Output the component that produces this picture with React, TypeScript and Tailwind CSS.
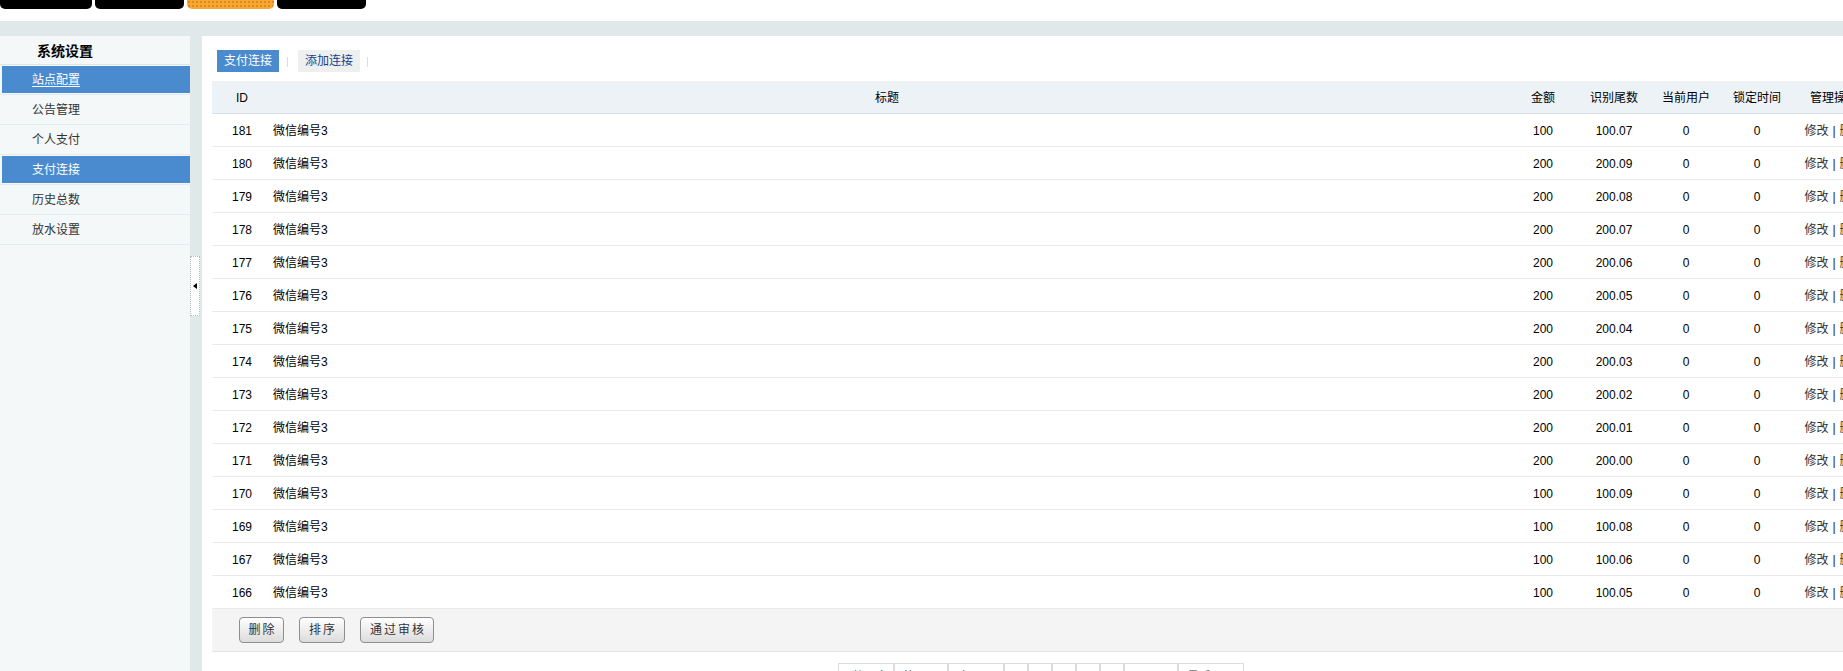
import React from "react";

const rows: [number, number, string][] = [
  [181, 100, "100.07"],
  [180, 200, "200.09"],
  [179, 200, "200.08"],
  [178, 200, "200.07"],
  [177, 200, "200.06"],
  [176, 200, "200.05"],
  [175, 200, "200.04"],
  [174, 200, "200.03"],
  [173, 200, "200.02"],
  [172, 200, "200.01"],
  [171, 200, "200.00"],
  [170, 100, "100.09"],
  [169, 100, "100.08"],
  [167, 100, "100.06"],
  [166, 100, "100.05"],
];

const menu = [
  { label: "站点配置", active: true, underline: true },
  { label: "公告管理" },
  { label: "个人支付" },
  { label: "支付连接", active: true },
  { label: "历史总数" },
  { label: "放水设置" },
];

function TopTabs() {
  return (
    <div className="flex h-[21px] items-start gap-[3px]">
      <div className="h-[9px] w-[92px] rounded-b-[5px] bg-black" />
      <div className="h-[9px] w-[89px] rounded-b-[5px] bg-black" />
      <div className="h-[9px] w-[87px] rounded-b-[5px] bg-[#f9a733] bg-[radial-gradient(#d88a1c_0.8px,transparent_1px)] bg-[length:4px_4px]" />
      <div className="h-[9px] w-[89px] rounded-b-[5px] bg-black" />
    </div>
  );
}

function Sidebar() {
  return (
    <div className="w-[190px] shrink-0 bg-[#f4f8f9]">
      <div className="flex h-[29px] items-center border-b border-[#dfe6e9] pl-[37px] pt-[2px] text-[14px] font-bold text-black">
        系统设置
      </div>
      {menu.map((m) => (
        <div key={m.label} className="-mr-[2px] border-b border-[#e4ebee] py-px pl-[2px]">
          <div
            className={`flex h-[27px] items-center pl-[30px] pt-px text-[12px] ${
              m.active ? "bg-[#4a8bd0] text-white" : "text-[#333]"
            } ${m.underline ? "underline underline-offset-2" : ""}`}
          >
            {m.label}
          </div>
        </div>
      ))}
    </div>
  );
}

function Divider() {
  return (
    <div className="relative w-[12px] shrink-0 bg-[#e0e8ea]">
      <div className="absolute left-0 top-[220px] flex h-[60px] w-[10px] items-center justify-center border border-dotted border-[#b8b8b8] bg-white">
        <span className="h-0 w-0 border-y-[3px] border-r-[4px] border-y-transparent border-r-black" />
      </div>
    </div>
  );
}

const cols = {
  id: "w-[60px] justify-center",
  title: "w-[1230px]",
  amount: "w-[82px] justify-center",
  tail: "w-[60px] justify-center",
  user: "w-[84px] justify-center",
  lock: "w-[58px] justify-center",
  op: "w-[96px] justify-center",
};

function Button({ label, w }: { label: string; w: string }) {
  return (
    <button
      className={`${w} h-[26px] rounded-[4px] border border-[#8e8e8e] bg-gradient-to-b from-white to-[#dcdcdc] pl-[2px] text-[12px] tracking-[2px] text-[#333]`}
    >
      {label}
    </button>
  );
}

function Pager() {
  const items: [string, string][] = [
    ["共15条", "w-[56px] justify-end pr-[4px]"],
    ["第一页", "w-[54px] justify-center"],
    ["上一页", "w-[56px] justify-center"],
    ["1", "w-[24px] justify-center"],
    ["2", "w-[24px] justify-center"],
    ["3", "w-[24px] justify-center"],
    ["4", "w-[24px] justify-center"],
    ["5", "w-[24px] justify-center"],
    ["下一页", "w-[54px] justify-center"],
    ["最后一页", "w-[66px] justify-center"],
  ];
  return (
    <div className="mt-[11px] flex w-[1658px] justify-center">
      {items.map(([t, c]) => (
        <div key={t} className={`flex h-[26px] border border-[#dcdcdc] pt-[6px] text-[12px] leading-[14px] text-[#333] ${c}`}>
          {t}
        </div>
      ))}
    </div>
  );
}

export default function App() {
  return (
    <div className="h-[671px] w-[1843px] overflow-hidden bg-white font-['Liberation_Sans','Noto_Sans_CJK_SC',sans-serif] text-[12px]">
      <TopTabs />
      <div className="h-[15px] bg-[#e0e8ea]" />
      <div className="flex h-[635px]">
        <Sidebar />
        <Divider />
        <div className="min-w-0 flex-1 bg-white pl-[10px]">
          <div className="flex h-[45px] items-start pt-[14px]">
            <div className="ml-[5px] flex h-[22px] w-[62px] items-center justify-center bg-[#4a8bd0] text-white">支付连接</div>
            <span className="mx-[8px] mt-[7px] h-[10px] w-px bg-[#dcdcdc]" />
            <div className="ml-[2px] flex h-[22px] w-[62px] items-center justify-center bg-[#eef0f0] text-[#1c3f8c]">添加连接</div>
            <span className="ml-[7px] mt-[7px] h-[10px] w-px bg-[#e6e0c4]" />
          </div>
          <div className="w-[1670px]">
            <div className="flex h-[33px] items-center border-b border-[#d5dee7] bg-[#edf2f6] pt-px text-black">
              <div className={`flex ${cols.id}`}>ID</div>
              <div className={`flex justify-center ${cols.title}`}>标题</div>
              <div className={`flex ${cols.amount}`}>金额</div>
              <div className={`flex ${cols.tail}`}>识别尾数</div>
              <div className={`flex ${cols.user}`}>当前用户</div>
              <div className={`flex ${cols.lock}`}>锁定时间</div>
              <div className={`flex ${cols.op}`}>管理操作</div>
            </div>
            {rows.map(([id, amt, tail]) => (
              <div key={id} className="flex h-[33px] items-center border-b border-[#e8eaeb] pt-[2px] text-black">
                <div className={`flex ${cols.id}`}>{id}</div>
                <div className={`flex pl-px ${cols.title}`}>微信编号3</div>
                <div className={`flex ${cols.amount}`}>{amt}</div>
                <div className={`flex ${cols.tail}`}>{tail}</div>
                <div className={`flex ${cols.user}`}>0</div>
                <div className={`flex ${cols.lock}`}>0</div>
                <div className={`flex ${cols.op} text-[#333]`}>
                  修改<span className="mx-[4px] text-[#1a1a40]">|</span>删除
                </div>
              </div>
            ))}
            <div className="flex h-[43px] items-center gap-[15px] border-b border-[#e6e6e6] bg-[#f4f4f4] pl-[27px]">
              <Button label="删除" w="w-[45px]" />
              <Button label="排序" w="w-[46px]" />
              <Button label="通过审核" w="w-[74px]" />
            </div>
          </div>
          <Pager />
        </div>
      </div>
    </div>
  );
}
